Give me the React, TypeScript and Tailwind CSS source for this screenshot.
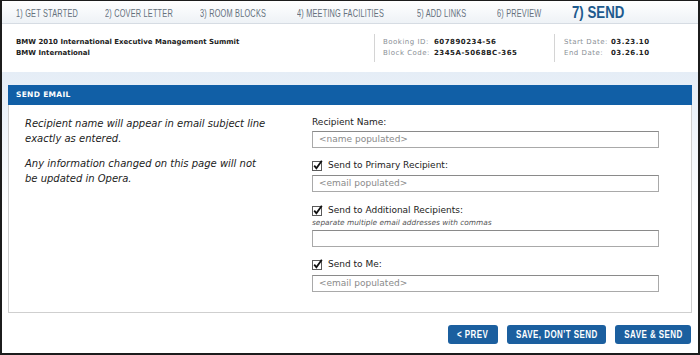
const sans = "font-['Liberation_Sans',Arial,sans-serif]";
const verdana = "font-['DejaVu_Sans','Verdana',sans-serif]";

const steps = [
  { label: '1) GET STARTED', w: 'w-[89px]' },
  { label: '2) COVER LETTER', w: 'w-[95px]' },
  { label: '3) ROOM BLOCKS', w: 'w-[97px]' },
  { label: '4) MEETING FACILITIES', w: 'w-[120px]' },
  { label: '5) ADD LINKS', w: 'w-[80px]' },
  { label: '6) PREVIEW', w: 'w-[75px]' },
];

function Check() {
  return (
    <svg width="12" height="12" viewBox="0 0 12 12" className="shrink-0">
      <rect x="0.5" y="1.5" width="9" height="9" fill="#fff" stroke="#5a5a5a" />
      <path d="M2.2 5.6 L4.4 8.2 L9.8 0.8" fill="none" stroke="#111" strokeWidth="1.8" />
    </svg>
  );
}

function Field({ value }: { value?: string }) {
  return (
    <div className="w-[347px] h-[17px] border border-[#a9a9a9] border-t-[#8a8a8a] bg-white pl-[6px] flex items-center text-[9px] text-[#8a8a8a]">
      {value}
    </div>
  );
}

function Label({ text, checked }: { text: string; checked?: boolean }) {
  return (
    <div className="flex items-center gap-[4px] h-[14px] text-[9px] text-[#222]">
      {checked && <Check />}
      <span>{text}</span>
    </div>
  );
}

function Btn({ w, children }: { w: string; children: React.ReactNode }) {
  return (
    <button className={`${w} h-[19px] rounded-[3px] bg-[#1b5f9f] text-white flex items-center justify-center`}>
      <span className="inline-block whitespace-nowrap text-[10.5px] font-bold tracking-[0.6px] scale-x-[0.76]">{children}</span>
    </button>
  );
}

export default function App() {
  return (
    <div className={`w-[700px] h-[355px] bg-white border-l-2 border-t border-r-2 border-b-2 border-[#1c1c1c] flex flex-col ${verdana}`}>
      {/* step nav */}
      <div className={`h-[23px] shrink-0 flex items-center pl-[14px] whitespace-nowrap bg-gradient-to-b from-white to-[#eef2f6] border-b border-[#d6dce3] ${sans}`}>
        {steps.map((s) => (
          <div key={s.label} className={`${s.w} shrink-0`}>
            <span className="inline-block origin-left scale-x-[0.64] text-[11.5px] text-[#66717d] tracking-[0.3px]">{s.label}</span>
          </div>
        ))}
        <span className="inline-block origin-left scale-x-[0.78] text-[17px] font-bold text-[#1d5a8e] leading-none">7) SEND</span>
      </div>

      {/* booking info */}
      <div className="h-[48px] shrink-0 flex items-center text-[7px] leading-[11px] whitespace-nowrap">
        <div className="w-[360px] pl-[14px] font-bold text-[#222]">
          <div>BMW 2010 International Executive Management Summit</div>
          <div>BMW International</div>
        </div>
        <div className="h-[28px] w-px bg-[#d4d4d4] ml-[12px]" />
        <div className="w-[179px] pl-[8px] tracking-[0.5px]">
          <div className="flex"><span className="w-[51px] text-[#8a8f96]">Booking ID:</span><span className="font-bold text-[#222]">607890234-56</span></div>
          <div className="flex"><span className="w-[51px] text-[#8a8f96]">Block Code:</span><span className="font-bold text-[#222]">2345A-5068BC-365</span></div>
        </div>
        <div className="h-[28px] w-px bg-[#d4d4d4]" />
        <div className="pl-[9px] tracking-[0.5px]">
          <div className="flex"><span className="w-[47px] text-[#8a8f96]">Start Date:</span><span className="font-bold text-[#222]">03.23.10</span></div>
          <div className="flex"><span className="w-[47px] text-[#8a8f96]">End Date:</span><span className="font-bold text-[#222]">03.26.10</span></div>
        </div>
      </div>

      {/* main */}
      <div className="flex-1 flex flex-col bg-gradient-to-b from-[#e5edf6] via-white to-white px-[6px] pt-[13px]">
        <div className="h-[20px] bg-[#115fa6] flex items-center pl-[8px] text-[7.5px] font-bold text-white tracking-[0.3px]">
          SEND EMAIL
        </div>
        <div className="h-[208px] bg-white border border-t-0 border-[#cfcfcf] flex">
          <div className="w-[303px] pl-[16px] pt-[11px] text-[10px] italic text-[#222] leading-[15px]">
            <p className="max-w-[252px]">Recipient name will appear in email subject line exactly as entered.</p>
            <p className="mt-[10px] max-w-[245px]">Any information changed on this page will not be updated in Opera.</p>
          </div>
          <div className="pt-[11px] flex flex-col">
            <Label text="Recipient Name:" />
            <div className="mt-[1px]"><Field value="<name populated>" /></div>

            <div className="mt-[11px]"><Label text="Send to Primary Recipient:" checked /></div>
            <div className="mt-[2px]"><Field value="<email populated>" /></div>

            <div className="mt-[12px]"><Label text="Send to Additional Recipients:" checked /></div>
            <div className="h-[10px] text-[7.4px] italic text-[#555] leading-[10px]">separate multiple email addresses with commas</div>
            <div className="mt-[2px]"><Field /></div>

            <div className="mt-[11px]"><Label text="Send to Me:" checked /></div>
            <div className="mt-[3px]"><Field value="<email populated>" /></div>
          </div>
        </div>

        <div className={`flex justify-end gap-[9px] mt-[12px] pr-[1px] ${sans}`}>
          <Btn w="w-[50px]">&lt; PREV</Btn>
          <Btn w="w-[99px]">SAVE, DON'T SEND</Btn>
          <Btn w="w-[76px]">SAVE &amp; SEND</Btn>
        </div>
      </div>
    </div>
  );
}
